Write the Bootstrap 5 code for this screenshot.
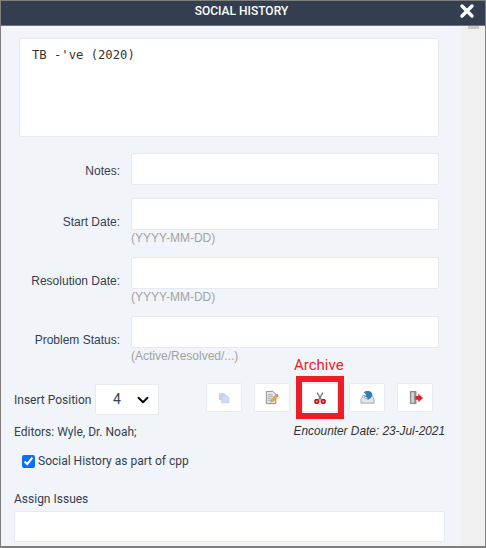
<!DOCTYPE html>
<html lang="en">
<head>
  <meta charset="UTF-8" />
  <meta name="viewport" content="width=device-width, initial-scale=1.0"/>
  <title>Social History</title>
  <link href="https://cdn.jsdelivr.net/npm/bootstrap@5.3.6/dist/css/bootstrap.min.css" rel="stylesheet" />
  <style>
    html, body { height: 100%; }
    body {
      background-color: #f1f4f8;
      font-family: Roboto, sans-serif;
      font-size: 12px;
      color: #333f50;
      overflow: hidden;
    }
    .dlg-frame {
      position: relative;
      width: 486px;
      height: 548px;
      border: 1px solid #7f7f7f;
      border-bottom-width: 2px;
      overflow: hidden;
    }
    .dlg-head {
      height: 25px;
      background-color: #333f50;
      border-bottom: 1px solid #6b7480;
      color: #fff;
      font-size: 12px;
      font-weight: 500;
      line-height: 21px;
      text-align: center;
      padding-right: 3px;
    }
    .dlg-close {
      right: 10px;
      top: 2px;
      width: 16px;
      height: 16px;
    }
    .dlg-main { height: 520px; }
    .dlg-body {
      width: 460px;
      padding: 12px 0 0 13px;
    }
    .dlg-scroll {
      width: 24px;
      background-color: #f0f0f0;
    }
    .dlg-thumb {
      width: 11px;
      height: 3px;
      margin-left: 7px;
      background-color: #c8c8c8;
    }
    .note-box {
      display: block;
      width: 420px;
      height: 99px;
      margin-left: 5px;
      padding: 8px 12px;
      background: #fff;
      border: 1px solid #e6e9ed;
      border-radius: 2px;
      resize: none;
      font-family: "DejaVu Sans Mono", monospace;
      font-size: 12.2px;
      line-height: 16px;
      color: #333;
    }
    .field-row { display: flex; align-items: flex-start; height: 32px; }
    .field-label {
      width: 106px;
      margin: 0 11px 0 0;
      text-align: right;
      line-height: 32px;
      font-family: "Liberation Sans", sans-serif;
      font-size: 12px;
      color: #333f50;
    }
    .label-low { margin-top: 8px; }
    .label-nudge { margin-top: 2px; }
    .field-input {
      width: 308px;
      height: 32px;
      border: 1px solid #e6e9ed;
      border-radius: 2px;
      background: #fff;
      padding: 0 8px;
      font-size: 12px;
    }
    .field-hint {
      color: #a3a3a3;
      font-family: "Liberation Sans", sans-serif;
      font-size: 12px;
      line-height: 14px;
      margin-left: 117px;
      margin-top: 1px;
    }
    .pos-select {
      width: 64px;
      height: 31px;
      padding: 0 0 0 17px;
      border: 1px solid #e6e9ed;
      border-radius: 2px;
      font-size: 14px;
      color: #333f50;
      background-color: #fff;
      background-position: right 7px center;
      background-size: 16px 12px;
      background-image: url("data:image/svg+xml,%3csvg xmlns='http://www.w3.org/2000/svg' viewBox='0 0 16 16'%3e%3cpath fill='none' stroke='%23000' stroke-linecap='round' stroke-linejoin='round' stroke-width='2.4' d='m2 5 6 6 6-6'/%3e%3c/svg%3e");
    }
    .tool-row { display: flex; gap: 11.75px; margin-left: 47px; margin-top: -4px; }
    .tool-btn {
      width: 36px;
      height: 29px;
      padding: 0;
      background: #fff;
      border: 1px solid #e8ebef;
      border-radius: 2px;
      display: flex;
      align-items: center;
      justify-content: center;
    }
    .archive-tag {
      left: 293px;
      top: 356px;
      color: #f0202c;
      font-size: 15px;
      line-height: 17px;
    }
    .archive-mark {
      left: 295px;
      top: 375px;
      width: 48px;
      height: 43px;
      border: 6px solid #ee1c25;
      pointer-events: none;
    }
    .enc-date {
      font-family: "Liberation Sans", sans-serif;
      font-style: italic;
      font-size: 11.85px;
      color: #333;
    }
    .cpp-check {
      width: 13px;
      height: 13px;
      margin: 0 3px 0 0;
      border-radius: 2px;
      accent-color: #0d6efd;
    }
    .assign-input {
      display: block;
      width: 431px;
      height: 31px;
      border: 1px solid #e6e9ed;
      border-radius: 2px;
      background: #fff;
    }
  </style>
</head>
<body>
<div class="dlg-frame">
  <div class="dlg-head position-relative">
    SOCIAL HISTORY
    <svg class="dlg-close position-absolute" viewBox="0 0 16 16">
      <path d="M3 3l10 10M13 3L3 13" stroke="#fff" stroke-width="3.4" stroke-linecap="round"/>
    </svg>
  </div>

  <div class="dlg-main d-flex">
    <div class="dlg-body">
      <textarea class="note-box">TB -'ve (2020)</textarea>

      <div class="field-row" style="margin-top:16px">
        <label class="field-label label-nudge">Notes:</label>
        <input class="field-input" type="text">
      </div>

      <div class="field-row" style="margin-top:13px">
        <label class="field-label label-low">Start Date:</label>
        <input class="field-input" type="text">
      </div>
      <div class="field-hint">(YYYY-MM-DD)</div>

      <div class="field-row" style="margin-top:12px">
        <label class="field-label label-low">Resolution Date:</label>
        <input class="field-input" type="text">
      </div>
      <div class="field-hint">(YYYY-MM-DD)</div>

      <div class="field-row" style="margin-top:12px">
        <label class="field-label label-low">Problem Status:</label>
        <input class="field-input" type="text">
      </div>
      <div class="field-hint">(Active/Resolved/...)</div>

      <div class="d-flex align-items-center" style="margin-top:21px">
        <span style="width:81px">Insert Position</span>
        <select class="form-select pos-select">
          <option>4</option>
        </select>
        <div class="tool-row">
          <button class="tool-btn" type="button" aria-label="Copy">
            <svg width="12" height="12" viewBox="0 0 12 12">
              <path d="M1 1h5l1.500 1.500V8H1z" fill="#c3d4ec"/>
              <path d="M3.500 3.500h5.500l2 2V11H3.500z" fill="#cddcf0" stroke="#b9cbe5" stroke-width=".6"/>
            </svg>
          </button>
          <button class="tool-btn" type="button" aria-label="Edit">
            <svg width="15" height="15" viewBox="0 0 16 16">
              <path d="M2.500 1.500h7l3 3v10h-10z" fill="#e6e6e6" stroke="#8a8a8a"/>
              <path d="M4 5h5M4 7h6M4 9h4M4 11h3" stroke="#9a9a9a" stroke-width=".8"/>
              <path d="M7 13l1-3 5-5 2 2-5 5z" fill="#e8a93a" stroke="#b8802a" stroke-width=".5"/>
              <path d="M13 5l1-1 1.500 1.500-1 1.500z" fill="#d96a7a"/>
            </svg>
          </button>
          <button class="tool-btn" type="button" aria-label="Archive">
            <svg width="12" height="12" viewBox="0 0 12 12">
              <path d="M3 .5l4.500 7.500M9 .5L4.500 8" stroke="#777" stroke-width="1.400" fill="none"/>
              <circle cx="2.800" cy="9.500" r="1.900" fill="#d9a0a2" stroke="#c4141c" stroke-width="1.600"/>
              <circle cx="9.200" cy="9.500" r="1.900" fill="#d9a0a2" stroke="#c4141c" stroke-width="1.600"/>
            </svg>
          </button>
          <button class="tool-btn" type="button" aria-label="Restore">
            <svg width="15" height="15" viewBox="0 0 16 16">
              <path d="M3 6h2v3h6V6h2l2 4v4H1v-4z" fill="#e4e7ea" stroke="#8a949c" stroke-width=".8"/>
              <path d="M4 2.500C6 .5 10 .5 12 2.500s1.500 4.500-1 6L8 11V8.500L4.500 6 7 5.500z" fill="#2f7fbd"/>
            </svg>
          </button>
          <button class="tool-btn" type="button" aria-label="Exit">
            <svg width="15" height="15" viewBox="0 0 16 16">
              <path d="M2 1h7v14H2z" fill="#8f8f8f"/>
              <path d="M3.500 2.500h3v11h-3z" fill="#d4d4d4"/>
              <path d="M8 6.500h3V4l5 4.500-5 4.500v-2.500H8z" fill="#e0202c"/>
            </svg>
          </button>
        </div>
      </div>

      <div class="d-flex justify-content-between" style="margin-top:8px;width:431px">
        <span>Editors: Wyle, Dr. Noah;</span>
        <span class="enc-date">Encounter Date: 23-Jul-2021</span>
      </div>

      <div class="d-flex align-items-center" style="margin-top:11px;margin-left:8px">
        <input class="cpp-check" type="checkbox" checked>
        <span>Social History as part of cpp</span>
      </div>

      <div style="margin-top:22px;line-height:14px">Assign Issues</div>
      <input class="assign-input" type="text" style="margin-top:5px">
    </div>

    <div class="dlg-scroll flex-shrink-0">
      <div class="dlg-thumb"></div>
    </div>
  </div>

  <span class="archive-tag position-absolute">Archive</span>
  <div class="archive-mark position-absolute"></div>
</div>
<script src="https://cdn.jsdelivr.net/npm/bootstrap@5.3.6/dist/js/bootstrap.bundle.min.js"></script>
</body>
</html>
